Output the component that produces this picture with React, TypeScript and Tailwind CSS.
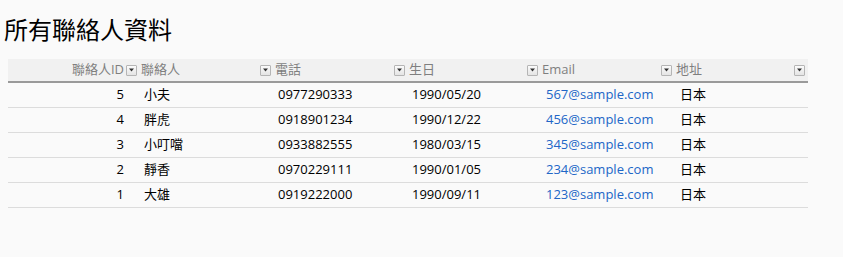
import React from "react";

type Contact = {
  id: number;
  name: string;
  phone: string;
  birthday: string;
  email: string;
  address: string;
};

const contacts: Contact[] = [
  { id: 5, name: "小夫", phone: "0977290333", birthday: "1990/05/20", email: "567@sample.com", address: "日本" },
  { id: 4, name: "胖虎", phone: "0918901234", birthday: "1990/12/22", email: "456@sample.com", address: "日本" },
  { id: 3, name: "小叮噹", phone: "0933882555", birthday: "1980/03/15", email: "345@sample.com", address: "日本" },
  { id: 2, name: "靜香", phone: "0970229111", birthday: "1990/01/05", email: "234@sample.com", address: "日本" },
  { id: 1, name: "大雄", phone: "0919222000", birthday: "1990/09/11", email: "123@sample.com", address: "日本" },
];

const cols = "grid grid-cols-[132px_134px_134px_133px_134px_133px]";

function FilterButton() {
  return (
    <span className="flex h-[11px] w-[11px] shrink-0 items-center justify-center rounded-[1px] border border-[#b5b5b5] bg-gradient-to-b from-[#fbfbfb] to-[#e4e4e4]">
      <svg width="5" height="4" viewBox="0 0 5 4">
        <path d="M0 0.5h5L2.5 3.5z" fill="#333" />
      </svg>
    </span>
  );
}

function HeaderCell({ label, right }: { label: string; right?: boolean }) {
  return (
    <div className="flex h-[22px] items-center pr-[3px] pl-[1px]">
      {right ? (
        <>
          <span className="flex-1 pr-[2px] text-right">{label}</span>
          <FilterButton />
        </>
      ) : (
        <>
          <span className="flex-1">{label}</span>
          <FilterButton />
        </>
      )}
    </div>
  );
}

export default function App() {
  return (
    <div
      className="min-h-[257px] w-full bg-[#fafafa] text-black"
      style={{ fontFamily: '"Open Sans", "Noto Sans CJK TC", sans-serif' }}
    >
      <h1 className="pt-[16px] pl-[4px] text-[24px] leading-[28px] font-normal">所有聯絡人資料</h1>

      <div className="mt-[15px] ml-[8px] w-[800px] text-[13px]">
        <div className={`${cols} border-b-2 border-[#9a9a9a] bg-[#f1f1f1] text-[#7f7f7f]`}>
          <HeaderCell label="聯絡人ID" right />
          <HeaderCell label="聯絡人" />
          <HeaderCell label="電話" />
          <HeaderCell label="生日" />
          <HeaderCell label="Email" />
          <HeaderCell label="地址" />
        </div>

        {contacts.map((c) => (
          <div key={c.id} className={`${cols} h-[25px] items-center border-b border-[#dcdcdc]`}>
            <div className="pr-[16px] text-right">{c.id}</div>
            <div className="pl-[4px]">{c.name}</div>
            <div className="pl-[4px]">{c.phone}</div>
            <div className="pl-[4px]">{c.birthday}</div>
            <div className="pl-[5px] text-[#2166c7]">{c.email}</div>
            <div className="pl-[5px]">{c.address}</div>
          </div>
        ))}
      </div>
    </div>
  );
}
